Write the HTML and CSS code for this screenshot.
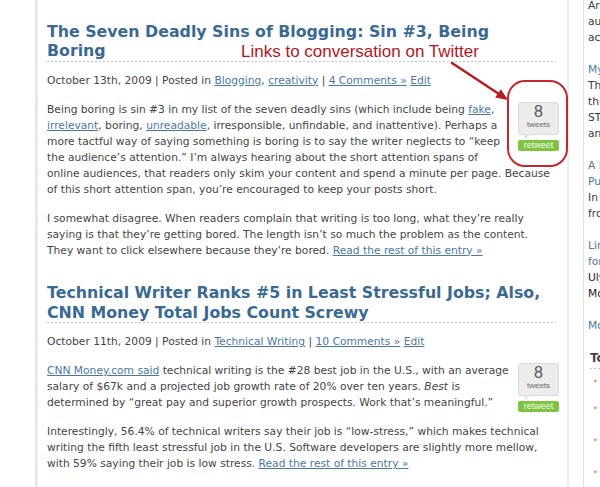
FILE: index.html
```html
<!DOCTYPE html>
<html>
<head>
<meta charset="utf-8">
<title>Blog</title>
<link rel="stylesheet" href="styles.css">
</head>
<body>
<div class="page">
  <div class="gutter"></div>
  <main class="content">
    <article class="post">
      <h2 class="post-title"><a href="#">The Seven Deadly Sins of Blogging: Sin #3, Being Boring</a></h2>
      <div class="meta">October 13th, 2009 | Posted in <a href="#">Blogging</a>, <a href="#">creativity</a> | <a href="#">4 Comments »</a> <a href="#">Edit</a></div>
      <p><span class="tweet"><span class="tweet-count"><b>8</b><small>tweets</small></span><span class="retweet">retweet</span></span>Being boring is sin #3 in my list of the seven deadly sins (which include being <a href="#">fake</a>, <a href="#">irrelevant</a>, boring, <a href="#">unreadable</a>, irresponsible, unfindable, and inattentive). Perhaps a more tactful way of saying something is boring is to say the writer neglects to “keep the audience’s attention.” I’m always hearing about the short attention spans of online audiences, that readers only skim your content and spend a minute per page. Because of this short attention span, you’re encouraged to keep your posts short.</p>
      <p>I somewhat disagree. When readers complain that writing is too long, what they’re really saying is that they’re getting bored. The length isn’t so much the problem as the content. They want to click elsewhere because they’re bored. <a href="#">Read the rest of this entry »</a></p>
    </article>
    <article class="post">
      <h2 class="post-title"><a href="#">Technical Writer Ranks #5 in Least Stressful Jobs; Also, CNN Money Total Jobs Count Screwy</a></h2>
      <div class="meta">October 11th, 2009 | Posted in <a href="#">Technical Writing</a> | <a href="#">10 Comments »</a> <a href="#">Edit</a></div>
      <p><span class="tweet"><span class="tweet-count"><b>8</b><small>tweets</small></span><span class="retweet">retweet</span></span><a href="#">CNN Money.com said</a> technical writing is the #28 best job in the U.S., with an average salary of $67k and a projected job growth rate of 20% over ten years. <em>Best</em> is determined by “great pay and superior growth prospects. Work that’s meaningful.”</p>
      <p>Interestingly, 56.4% of technical writers say their job is “low-stress,” which makes technical writing the fifth least stressful job in the U.S. Software developers are slightly more mellow, with 59% saying their job is low stress. <a href="#">Read the rest of this entry »</a></p>
    </article>
  </main>
  <aside class="sidebar">
    <div class="item first">
      <p>Are you writing for a real<br>audience, or just trying to<br>achieve a better ranking?</p>
    </div>
    <div class="item">
      <a href="#">My Favorite STC Sessions</a>
      <p>The summit covered a lot<br>this year, from Twitter to<br>STC membership models<br>and information design.</p>
    </div>
    <div class="item">
      <a href="#">A Look at Single-Source<br>Publishing Tools</a>
      <p>In this post, I compare output<br>from several authoring tools.</p>
    </div>
    <div class="item">
      <a href="#">Links of the Week: Resources<br>for Technical Writers</a>
      <p class="strong">Ulysses, RoboHelp, and more<br>Monday reading for writers.</p>
    </div>
    <div class="item">
      <a href="#">More posts »</a>
    </div>
    <h3 class="side-heading">Topics</h3>
    <ul class="topics">
      <li>Blogging</li>
      <li>Technical writing</li>
      <li>Social media</li>
      <li>Creativity</li>
    </ul>
  </aside>

  <div class="callout-text">Links to conversation on Twitter</div>
  <svg class="callout-arrow" viewBox="0 0 75 50" width="75" height="50" aria-hidden="true">
    <line x1="12" y1="8" x2="59" y2="39" stroke="#b81c22" stroke-width="2.5" stroke-linecap="round"/>
    <polygon points="68,45 55.2,42.6 60.8,34.2" fill="#b81c22"/>
  </svg>
  <div class="callout-ring"></div>
</div>
</body>
</html>
```
FILE: styles.css
```css
html, body {
  margin: 0;
  padding: 0;
  background: #fff;
  overflow: hidden;
}

body {
  width: 600px;
  height: 487px;
  font-family: "DejaVu Sans", Verdana, sans-serif;
  font-size: 10.7px;
  line-height: 16px;
  color: #444;
}

a {
  color: #4a78a1;
  text-decoration: underline;
}

.page {
  position: relative;
  display: flex;
  height: 487px;
  overflow: hidden;
}

.gutter {
  flex: 0 0 35px;
}

.content {
  flex: 0 0 509px;
  border-left: 3px solid #e8e8e8;
  border-right: 2px solid #ededed;
  padding: 21.5px 11px 0 9px;
}

.post + .post {
  margin-top: 24.7px;
}

.post-title {
  margin: 0;
  font-size: 15.8px;
  line-height: 19.5px;
  font-weight: bold;
  padding: 0 8px 1px 0;
  background: repeating-linear-gradient(90deg, #c4c4c4 0 2px, transparent 2px 4px) left bottom / 100% 1px no-repeat;
}

.post-title a {
  color: #3a6a91;
  text-decoration: none;
}

.meta {
  margin-top: 11px;
}

.post p {
  margin: 13px 0 0;
}

.tweet {
  float: right;
  width: 41px;
  margin: 0 -3px 6px 7px;
  font-family: "Liberation Sans", Arial, sans-serif;
  text-align: center;
}

.tweet-count {
  display: block;
  position: relative;
  height: 31px;
  background: #ececec;
  border: 1px solid #dadada;
  border-radius: 3px;
  color: #555;
}

.tweet-count b {
  display: block;
  font-weight: normal;
  font-size: 16px;
  line-height: 16px;
  padding-top: 1px;
}

.tweet-count small {
  display: block;
  font-size: 8px;
  line-height: 10px;
  color: #6a6a6a;
}

.tweet-count::before,
.tweet-count::after {
  content: "";
  position: absolute;
  left: 6px;
  width: 0;
  height: 0;
  border-style: solid;
}

.tweet-count::before {
  bottom: -5px;
  border-width: 5px 5px 0 0;
  border-color: #dadada transparent transparent transparent;
}

.tweet-count::after {
  bottom: -3px;
  left: 7px;
  border-width: 4px 3px 0 0;
  border-color: #ececec transparent transparent transparent;
}

.retweet {
  display: block;
  margin-top: 5px;
  height: 11px;
  line-height: 11px;
  background: #7fc341;
  border-radius: 2px;
  color: #f4fbe9;
  font-size: 9px;
}

.sidebar {
  flex: 0 0 250px;
  margin-left: 14px;
  border-left: 1px solid #e2e2e2;
  padding-left: 4px;
  white-space: nowrap;
  color: #3a3a3a;
}

.sidebar .item {
  margin-bottom: 16px;
}

.sidebar .item.first {
  margin-top: -1.6px;
}

.sidebar .item a {
  display: block;
  text-decoration: none;
  color: #4a78a1;
}

.sidebar p {
  margin: 0;
}

.sidebar p.strong {
  color: #222;
}

.side-heading {
  margin: 0 0 0 2px;
  font-size: 12px;
  line-height: 16px;
  font-weight: bold;
  color: #444;
  padding-bottom: 3px;
  background: repeating-linear-gradient(90deg, #c4c4c4 0 2px, transparent 2px 4px) left bottom / 100% 1px no-repeat;
}

.topics {
  list-style: none;
  margin: 3px 0 0;
  padding: 0 0 0 5px;
}

.topics li {
  position: relative;
  padding: 2px 0 14px 10px;
}

.topics li:first-child {
  padding-bottom: 9px;
}

.topics li::before {
  content: "•";
  position: absolute;
  left: 0;
  top: 2px;
  font-size: 8px;
  color: #f08a3c;
}

.callout-text {
  position: absolute;
  left: 241px;
  top: 42.4px;
  font-family: "Liberation Sans", Arial, sans-serif;
  font-size: 17px;
  line-height: 20px;
  color: #b3161e;
  white-space: nowrap;
}

.callout-arrow {
  position: absolute;
  left: 440px;
  top: 55px;
}

.callout-ring {
  position: absolute;
  left: 507px;
  top: 80px;
  width: 57px;
  height: 83px;
  border: 2px solid #c1272d;
  border-radius: 18px;
}
```
